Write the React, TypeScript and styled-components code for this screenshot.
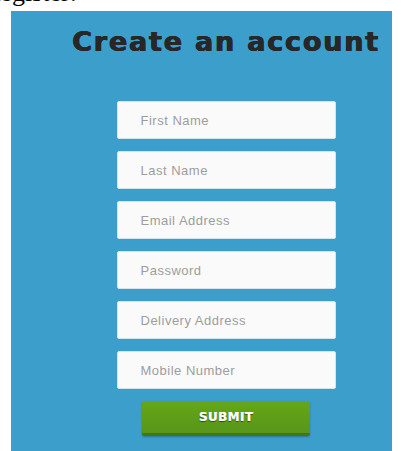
import React from "react";
import styled, { createGlobalStyle } from "styled-components";

const GlobalStyle = createGlobalStyle`
  html, body {
    margin: 0;
    padding: 0;
    background: #ffffff;
  }
`;

const Page = styled.div`
  width: 401px;
  height: 451px;
  overflow: hidden;
`;

// strip of the text line above the form, mostly scrolled out of view
const Lead = styled.div`
  height: 11px;
  overflow: hidden;
`;

const LeadText = styled.p`
  margin: -22px 0 0 -17px;
  font-family: "Liberation Serif", serif;
  font-size: 26px;
  line-height: 30px;
  color: #000;
  white-space: nowrap;
`;

const Panel = styled.section`
  margin-left: 11px;
  width: 381px;
  height: 440px;
  background: #3c9ecb;
  box-sizing: border-box;
  padding: 13px 11px 0 60px;
  display: flex;
  flex-direction: column;
  align-items: center;
`;

const Title = styled.h1`
  margin: 0 0 41px;
  font-family: "DejaVu Sans", sans-serif;
  font-weight: 800;
  font-size: 27px;
  line-height: 36px;
  letter-spacing: 1.8px;
  color: #272727;
  text-shadow: 0.6px 0 0 #272727, -0.4px 0 0 #272727;
  white-space: nowrap;
`;

const Form = styled.form`
  display: flex;
  flex-direction: column;
  align-items: center;
  gap: 12px;
`;

const Field = styled.input`
  width: 219px;
  height: 38px;
  box-sizing: border-box;
  padding: 0 0 0 23px;
  border: 1px solid #d5e3ea;
  border-radius: 2px;
  background: #fafafa;
  font-family: "Liberation Sans", Arial, sans-serif;
  font-size: 13px;
  letter-spacing: 0.5px;
  color: #555;
  outline: none;

  &::placeholder {
    color: #9d9d9d;
  }
`;

const Submit = styled.button`
  width: 168px;
  height: 35px;
  border: none;
  border-bottom: 3px solid #3f7a10;
  border-radius: 2px;
  background: linear-gradient(#66a617, #57961a);
  color: #ffffff;
  font-family: "DejaVu Sans", sans-serif;
  font-weight: 800;
  font-size: 12px;
  letter-spacing: 0.4px;
  text-shadow: 0 1px 1px rgba(0, 0, 0, 0.5), 0.4px 0 0 #fff;
  box-shadow: 0 1px 2px rgba(0, 0, 0, 0.25);
  cursor: pointer;
`;

const fields = [
  "First Name",
  "Last Name",
  "Email Address",
  "Password",
  "Delivery Address",
  "Mobile Number",
];

export default function App() {
  return (
    <Page>
      <GlobalStyle />
      <Lead>
        <LeadText>Register:</LeadText>
      </Lead>
      <Panel>
        <Title>Create an account</Title>
        <Form onSubmit={(e) => e.preventDefault()}>
          {fields.map((f) => (
            <Field
              key={f}
              type={f === "Password" ? "password" : "text"}
              placeholder={f}
            />
          ))}
          <Submit type="submit">SUBMIT</Submit>
        </Form>
      </Panel>
    </Page>
  );
}
